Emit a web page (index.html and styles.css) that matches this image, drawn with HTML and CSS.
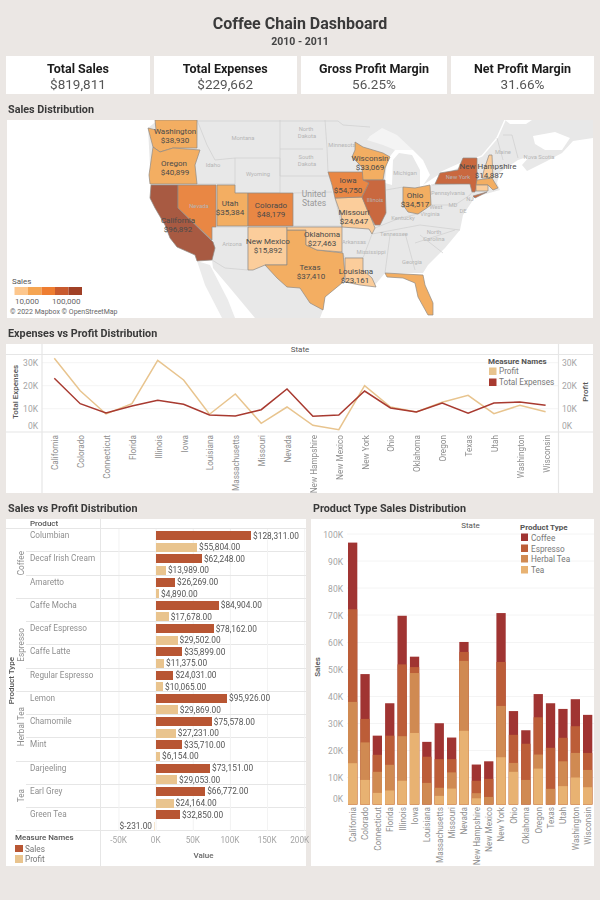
FILE: index.html
```html
<!DOCTYPE html>
<html lang="en">
<head>
<meta charset="utf-8">
<title>Coffee Chain Dashboard</title>
<link rel="stylesheet" href="styles.css">
</head>
<body>
<main class="page">
  <header class="head">
    <h1>Coffee Chain Dashboard</h1>
    <p>2010 - 2011</p>
  </header>

  <section class="kpis">
    <div class="kpi k1"><b>Total Sales</b><span>$819,811</span></div>
    <div class="kpi k2"><b>Total Expenses</b><span>$229,662</span></div>
    <div class="kpi k3"><b>Gross Profit Margin</b><span>56.25%</span></div>
    <div class="kpi k4"><b>Net Profit Margin</b><span>31.66%</span></div>
  </section>

  <h2>Sales Distribution</h2>
  <svg class="map" viewBox="7 120 586 198" xmlns="http://www.w3.org/2000/svg">
    <rect class="water" x="7" y="120" width="586" height="198"/>
    <polygon class="land" points="158,120 593,120 593,138 573,141 562,153 547,161 527,171 522,165 530,156 518,160 500,172 497,183 500,190 475,197 463,215 460,230 445,248 428,265 423,273 385,273 375,285 343,282 325,297 323,310 320,318 255,318 230,288 213,268 212,260 178,208 151,185 148,128"/>
    <polygon class="mex" points="197,261 210,265 228,300 235,318 222,318 205,285"/>
    <polygon class="lake" points="370,136 382,128 397,135 413,150 395,150 383,145 367,140"/>
    <polygon class="water" points="385,183 387,160 395,150 413,150 423,160 430,175 420,190 420,170 412,155 399,153 393,160 392,185"/>
    <polygon class="water" points="420,187 438,175 440,180 425,190"/>
    <polygon class="water" points="440,172 460,163 458,168 442,175"/>
    <polyline class="river" points="460,165 482,156 497,138 505,120"/>
    <polygon class="water" points="533,136 555,132 570,138 562,150 545,150 535,144"/>
    <polygon class="water" points="505,120 532,120 526,124 510,124"/>
    <path class="border" d="M197,121H338L343,125L370,127M197,120L207,145L215,160L235,158H280V193H235V158M280,120V176M280,149H323M280,176H330M325,120L327,148L328,172M293,193L332,192M335,198L342,227M197,184H235M216,227H248V270L225,268L212,260M342,252L345,258H363L372,234M372,234L420,225L460,230M455,230L415,243M375,228L400,218L418,214M390,235L385,273M405,233L415,270M420,235L443,253M418,214L430,205H455L470,195L472,192M431,185L470,183M386,190L403,187V205M293,226H342M497,138L503,160M503,135L512,135L518,158"/>

    <polygon class="c2" points="155,120 197,120 197,148 173,148 160,152 153,147 148,128 156,130"/>
    <polygon class="c2" points="153,147 160,152 173,148 200,150 195,165 197,184 150,184 149,175"/>
    <polygon class="c5" points="151,185 178,185 178,208 213,242 215,248 212,260 197,261 195,255 177,247 170,238 165,225 155,208 150,198"/>
    <polygon class="c3" points="178,185 216,185 216,227 212,227 212,240 178,208"/>
    <polygon class="c2" points="217,185 235,185 235,193 248,193 248,226 217,226"/>
    <polygon class="c3" points="248,193 293,193 293,226 248,226"/>
    <polygon class="c1" points="248,227 287,227 287,265 265,265 253,270 248,270"/>
    <polygon class="c2" points="287,230 306,230 306,245 317,250 343,253 345,275 342,283 325,297 323,310 310,303 300,288 287,287 277,278 265,265 287,265"/>
    <polygon class="c1" points="287,227 342,227 342,252 317,250 306,245 306,230 287,230"/>
    <polygon class="c1" points="345,258 363,258 363,270 372,278 376,287 360,285 345,282 345,275"/>
    <polygon class="c1" points="335,198 362,197 368,210 375,228 372,234 369,229 342,227 341,215"/>
    <polygon class="c3" points="328,172 363,172 369,183 362,197 335,198 332,185"/>
    <polygon class="c2" points="355,142 363,147 383,153 390,157 385,168 383,180 363,180 362,167 352,157 355,150"/>
    <polygon class="c4" points="363,180 385,180 386,213 380,225 375,225 368,212 362,197 369,183"/>
    <polygon class="c2" points="403,187 415,188 430,185 431,205 418,214 408,212 403,205"/>
    <polygon class="c2" points="385,273 423,275 425,285 433,303 433,315 428,315 418,297 415,283 403,278 387,277"/>
    <polygon class="c4" points="463,158 477,158 477,186 475,192 472,192 470,184 435,184 440,173 458,170"/>
    <polygon class="c4" points="473,196 487,192 475,198"/>
    <polygon class="c1" points="489,155 492,155 493,178 482,178 484,170"/>
    <polygon class="c2" points="477,180 492,178 498,188 493,190 488,185 476,185"/>
    <polygon class="c1" points="476,185 488,185 488,191 476,191"/>

    <g class="bg-labels">
      <text x="243" y="140">Montana</text><text x="213" y="167">Idaho</text><text x="258" y="176">Wyoming</text>
      <text x="232" y="246">Arizona</text><text x="199" y="208">Nevada</text><text x="306" y="131">North</text><text x="307" y="138">Dakota</text>
      <text x="306" y="159">South</text><text x="307" y="166">Dakota</text><text x="342" y="147">Minnesota</text><text x="405" y="175">Michigan</text>
      <text x="403" y="220">Kentucky</text><text x="394" y="236">Tennessee</text><text x="354" y="244">Arkansas</text><text x="371" y="254">Mississippi</text>
      <text x="412" y="264">Georgia</text><text x="448" y="195">Pennsylvania</text><text x="436" y="209">West</text><text x="430" y="216">Virginia</text>
      <text x="453" y="207">MD</text><text x="434" y="234">North</text><text x="434" y="241">Carolina</text><text x="503" y="154">Maine</text>
      <text x="539" y="159">Nova Scotia</text><text x="458" y="179">New York</text><text x="375" y="202">Illinois</text><text x="463" y="213">DE</text><text x="470" y="201">NJ</text>
    </g>
    <text class="country" x="314" y="197">United</text><text class="country" x="314" y="206">States</text>

    <g class="st">
      <text x="175" y="134">Washington</text><text x="175" y="143">$38,930</text>
      <text x="174" y="166">Oregon</text><text x="175" y="175">$40,899</text>
      <text x="178" y="223">California</text><text x="178" y="232">$96,892</text>
      <text x="230" y="206">Utah</text><text x="230" y="215">$35,384</text>
      <text x="271" y="208">Colorado</text><text x="271" y="217">$48,179</text>
      <text x="268" y="244">New Mexico</text><text x="268" y="253">$15,892</text>
      <text x="310" y="270">Texas</text><text x="311" y="279">$37,410</text>
      <text x="322" y="237">Oklahoma</text><text x="322" y="246">$27,463</text>
      <text x="356" y="274">Louisiana</text><text x="355" y="283">$23,161</text>
      <text x="354" y="215">Missouri</text><text x="354" y="224">$24,647</text>
      <text x="348" y="183">Iowa</text><text x="348" y="193">$54,750</text>
      <text x="370" y="161">Wisconsin</text><text x="370" y="170">$33,069</text>
      <text x="415" y="198">Ohio</text><text x="415" y="207">$34,517</text>
      <text x="488" y="169">New Hampshire</text><text x="489" y="178">$14,887</text>
    </g>

    <text class="lg-title" x="12" y="284">Sales</text>
    <rect class="r1" x="14.5" y="287" width="13.5" height="8"/><rect class="r2" x="28" y="287" width="13.5" height="8"/><rect class="r3" x="41.5" y="287" width="13.5" height="8"/><rect class="r4" x="55" y="287" width="13.5" height="8"/><rect class="r5" x="68.5" y="287" width="13.5" height="8"/>
    <text class="lg-val" x="15" y="304">10,000</text><text class="lg-val" x="52" y="304">100,000</text>
    <text class="copy" x="10" y="314">© 2022 Mapbox © OpenStreetMap</text>
  </svg>

  <h2>Expenses vs Profit Distribution</h2>
  <svg class="lines" viewBox="6 344 587 149" xmlns="http://www.w3.org/2000/svg">
    <rect class="panelbg" x="6" y="344" width="587" height="149"/>
    <path class="grid" d="M42,362.7H558M42,385.7H558M42,408.7H558"/>
    <path class="rule" d="M6,354.5H593M6,432H593M42,344V493M558.5,344V493"/>
    <text class="hdr" x="300" y="352">State</text>
    <g class="yl">
      <text x="38" y="366">30K</text><text x="38" y="389">20K</text><text x="38" y="412">10K</text><text x="38" y="429">0K</text>
    </g>
    <g class="yr">
      <text x="562" y="366">30K</text><text x="562" y="389">20K</text><text x="562" y="412">10K</text><text x="562" y="429">0K</text>
    </g>
    <text class="axt" transform="translate(18 392) rotate(-90)">Total Expenses</text>
    <text class="axt" transform="translate(588 392) rotate(-90)">Profit</text>
    <polyline class="l-profit" points="54.3,358.3 80.2,390.7 106,414 131.9,403.7 157.7,360.3 183.6,380 209.5,414.3 235.3,394 261.2,423.3 287,407 312.9,425.3 338.8,429.7 364.6,385.7 390.5,407 416.3,412 442.2,402.3 468.1,395.3 493.9,413.7 519.8,405.3 545.6,411.7"/>
    <polyline class="l-exp" points="54.3,378.3 80.2,403.7 106,413 131.9,406 157.7,400.3 183.6,404.3 209.5,415 235.3,416 261.2,409.7 287,389 312.9,416.3 338.8,415 364.6,391 390.5,408 416.3,412 442.2,403 468.1,413.3 493.9,403 519.8,402 545.6,405.3"/>
    <g class="xl">
      <text transform="translate(58 435) rotate(-90)">California</text>
      <text transform="translate(84 435) rotate(-90)">Colorado</text>
      <text transform="translate(110 435) rotate(-90)">Connecticut</text>
      <text transform="translate(136 435) rotate(-90)">Florida</text>
      <text transform="translate(161.500 435) rotate(-90)">Illinois</text>
      <text transform="translate(187.500 435) rotate(-90)">Iowa</text>
      <text transform="translate(213 435) rotate(-90)">Louisiana</text>
      <text transform="translate(239 435) rotate(-90)">Massachusetts</text>
      <text transform="translate(265 435) rotate(-90)">Missouri</text>
      <text transform="translate(291 435) rotate(-90)">Nevada</text>
      <text transform="translate(316.500 435) rotate(-90)">New Hampshire</text>
      <text transform="translate(342.500 435) rotate(-90)">New Mexico</text>
      <text transform="translate(368.500 435) rotate(-90)">New York</text>
      <text transform="translate(394 435) rotate(-90)">Ohio</text>
      <text transform="translate(420 435) rotate(-90)">Oklahoma</text>
      <text transform="translate(446 435) rotate(-90)">Oregon</text>
      <text transform="translate(472 435) rotate(-90)">Texas</text>
      <text transform="translate(497.500 435) rotate(-90)">Utah</text>
      <text transform="translate(523.500 435) rotate(-90)">Washington</text>
      <text transform="translate(549.500 435) rotate(-90)">Wisconsin</text>
    </g>
    <text class="lg-title2" x="488" y="364">Measure Names</text>
    <rect class="s-profit" x="489" y="367.500" width="7.500" height="7.500"/><text class="lg-item" x="499" y="374">Profit</text>
    <rect class="s-exp" x="489" y="378.500" width="7.500" height="7.500"/><text class="lg-item" x="499" y="385">Total Expenses</text>
  </svg>

  <section class="bottom">
    <div class="col-left">
      <h2>Sales vs Profit Distribution</h2>
      <div class="bars">
        <div class="th-blank"></div>
        <div class="th-product">Product</div>
        <div class="th-plot"></div>
        <div class="ptype"><span class="vert strong">Product Type</span></div>
        <div class="group g1"><span class="vert">Coffee</span></div>
        <div class="group g2"><span class="vert">Espresso</span></div>
        <div class="group g3"><span class="vert">Herbal Tea</span></div>
        <div class="group g4"><span class="vert">Tea</span></div>

        <div class="row"><div class="prod">Columbian</div><div class="plot"><div class="ln"><i class="b-s" style="width:95.6px"></i><span>$128,311.00</span></div><div class="ln"><i class="b-p" style="width:41.6px"></i><span>$55,804.00</span></div></div></div>
        <div class="row"><div class="prod">Decaf Irish Cream</div><div class="plot"><div class="ln"><i class="b-s" style="width:46.4px"></i><span>$62,248.00</span></div><div class="ln"><i class="b-p" style="width:10.4px"></i><span>$13,989.00</span></div></div></div>
        <div class="row end"><div class="prod">Amaretto</div><div class="plot"><div class="ln"><i class="b-s" style="width:19.6px"></i><span>$26,269.00</span></div><div class="ln"><i class="b-p" style="width:3.6px"></i><span>$4,890.00</span></div></div></div>
        <div class="row"><div class="prod">Caffe Mocha</div><div class="plot"><div class="ln"><i class="b-s" style="width:63.3px"></i><span>$84,904.00</span></div><div class="ln"><i class="b-p" style="width:13.2px"></i><span>$17,678.00</span></div></div></div>
        <div class="row"><div class="prod">Decaf Espresso</div><div class="plot"><div class="ln"><i class="b-s" style="width:58.2px"></i><span>$78,162.00</span></div><div class="ln"><i class="b-p" style="width:22px"></i><span>$29,502.00</span></div></div></div>
        <div class="row"><div class="prod">Caffe Latte</div><div class="plot"><div class="ln"><i class="b-s" style="width:26.7px"></i><span>$35,899.00</span></div><div class="ln"><i class="b-p" style="width:8.5px"></i><span>$11,375.00</span></div></div></div>
        <div class="row end"><div class="prod">Regular Espresso</div><div class="plot"><div class="ln"><i class="b-s" style="width:17.9px"></i><span>$24,031.00</span></div><div class="ln"><i class="b-p" style="width:7.5px"></i><span>$10,065.00</span></div></div></div>
        <div class="row"><div class="prod">Lemon</div><div class="plot"><div class="ln"><i class="b-s" style="width:71.5px"></i><span>$95,926.00</span></div><div class="ln"><i class="b-p" style="width:22.3px"></i><span>$29,869.00</span></div></div></div>
        <div class="row"><div class="prod">Chamomile</div><div class="plot"><div class="ln"><i class="b-s" style="width:56.3px"></i><span>$75,578.00</span></div><div class="ln"><i class="b-p" style="width:20.3px"></i><span>$27,231.00</span></div></div></div>
        <div class="row end"><div class="prod">Mint</div><div class="plot"><div class="ln"><i class="b-s" style="width:26.6px"></i><span>$35,710.00</span></div><div class="ln"><i class="b-p" style="width:4.6px"></i><span>$6,154.00</span></div></div></div>
        <div class="row"><div class="prod">Darjeeling</div><div class="plot"><div class="ln"><i class="b-s" style="width:54.5px"></i><span>$73,151.00</span></div><div class="ln"><i class="b-p" style="width:21.6px"></i><span>$29,053.00</span></div></div></div>
        <div class="row"><div class="prod">Earl Grey</div><div class="plot"><div class="ln"><i class="b-s" style="width:49.7px"></i><span>$66,772.00</span></div><div class="ln"><i class="b-p" style="width:18px"></i><span>$24,164.00</span></div></div></div>
        <div class="row end"><div class="prod">Green Tea</div><div class="plot"><div class="ln"><i class="b-s" style="width:24.5px"></i><span>$32,850.00</span></div><div class="ln neg"><span>$-231.00</span><i class="b-n"></i></div></div></div>

        <div class="legend">
          <div class="lg-head">Measure Names</div>
          <div class="lg-row"><i class="b-s"></i>Sales</div>
          <div class="lg-row"><i class="b-p"></i>Profit</div>
        </div>
        <div class="axis">
          <div class="ticks"><span>-50K</span><span>0K</span><span>50K</span><span>100K</span><span>150K</span><span class="last">200K</span></div>
          <div class="axis-title">Value</div>
        </div>
      </div>
    </div>

    <div class="col-right">
      <h2>Product Type Sales Distribution</h2>
      <svg class="stack" viewBox="311 519 283 347" xmlns="http://www.w3.org/2000/svg">
        <rect class="panelbg" x="311" y="519" width="283" height="347"/>
        <path class="grid" d="M347,534H594M347,561H594M347,588H594M347,615H594M347,642.500H594M347,669.500H594M347,696.500H594M347,723.500H594M347,750.500H594M347,777.500H594"/>
        <text class="hdr" x="470.500" y="528">State</text>
        <g class="yl">
          <text x="343" y="538">100K</text><text x="343" y="565">90K</text><text x="343" y="592">80K</text><text x="343" y="619">70K</text><text x="343" y="646">60K</text><text x="343" y="673">50K</text><text x="343" y="700">40K</text><text x="343" y="727">30K</text><text x="343" y="754">20K</text><text x="343" y="781">10K</text><text x="343" y="802">0K</text>
        </g>
        <text class="axt" transform="translate(320 667) rotate(-90)">Sales</text>

        <g class="sb" transform="translate(348 804.5) scale(1 -2.7)"><rect class="cof" height="97"/><rect class="esp" height="72.3"/><rect class="her" height="38"/><rect class="tea" height="15.3"/></g>
        <g class="sb" transform="translate(360.400 804.5) scale(1 -2.7)"><rect class="cof" height="48.3"/><rect class="esp" height="31.7"/><rect class="her" height="23"/><rect class="tea" height="9.1"/></g>
        <g class="sb" transform="translate(372.700 804.5) scale(1 -2.7)"><rect class="cof" height="25.5"/><rect class="esp" height="18.4"/><rect class="her" height="12.1"/><rect class="tea" height="4.3"/></g>
        <g class="sb" transform="translate(385.100 804.5) scale(1 -2.7)"><rect class="cof" height="37.5"/><rect class="esp" height="25.5"/><rect class="her" height="14.7"/><rect class="tea" height="5.2"/></g>
        <g class="sb" transform="translate(397.500 804.5) scale(1 -2.7)"><rect class="cof" height="69.9"/><rect class="esp" height="51.9"/><rect class="her" height="25.3"/><rect class="tea" height="8.8"/></g>
        <g class="sb" transform="translate(409.900 804.5) scale(1 -2.7)"><rect class="cof" height="54.75"/><rect class="esp" height="50.9"/><rect class="her" height="48.7"/><rect class="tea" height="26.5"/></g>
        <g class="sb" transform="translate(422.200 804.5) scale(1 -2.7)"><rect class="cof" height="23.2"/><rect class="esp" height="17.7"/><rect class="her" height="8"/></g>
        <g class="sb" transform="translate(434.600 804.5) scale(1 -2.7)"><rect class="cof" height="30.1"/><rect class="esp" height="16.8"/><rect class="her" height="6.2"/><rect class="tea" height="3.2"/></g>
        <g class="sb" transform="translate(447 804.5) scale(1 -2.7)"><rect class="cof" height="24.8"/><rect class="esp" height="16.8"/><rect class="her" height="11.9"/><rect class="tea" height="5.9"/></g>
        <g class="sb" transform="translate(459.300 804.5) scale(1 -2.7)"><rect class="cof" height="60.2"/><rect class="esp" height="56.5"/><rect class="her" height="53.2"/><rect class="tea" height="27.3"/></g>
        <g class="sb" transform="translate(471.700 804.5) scale(1 -2.7)"><rect class="cof" height="14.8"/><rect class="esp" height="8.8"/><rect class="her" height="4.2"/><rect class="tea" height="2.3"/></g>
        <g class="sb" transform="translate(484.100 804.5) scale(1 -2.7)"><rect class="cof" height="16"/><rect class="esp" height="9.5"/><rect class="her" height="2.8"/></g>
        <g class="sb" transform="translate(496.400 804.5) scale(1 -2.7)"><rect class="cof" height="70.9"/><rect class="esp" height="52.8"/><rect class="her" height="36.5"/><rect class="tea" height="17.5"/></g>
        <g class="sb" transform="translate(508.800 804.5) scale(1 -2.7)"><rect class="cof" height="34.6"/><rect class="esp" height="25.8"/><rect class="her" height="15.4"/><rect class="tea" height="12.1"/></g>
        <g class="sb" transform="translate(521.200 804.5) scale(1 -2.7)"><rect class="cof" height="27.5"/><rect class="esp" height="22.5"/><rect class="her" height="9.1"/></g>
        <g class="sb" transform="translate(533.600 804.5) scale(1 -2.7)"><rect class="cof" height="40.9"/><rect class="esp" height="32.3"/><rect class="her" height="18.5"/><rect class="tea" height="13.3"/></g>
        <g class="sb" transform="translate(545.900 804.5) scale(1 -2.7)"><rect class="cof" height="37.5"/><rect class="esp" height="21"/><rect class="her" height="5.8"/></g>
        <g class="sb" transform="translate(558.300 804.5) scale(1 -2.7)"><rect class="cof" height="35.4"/><rect class="esp" height="24.7"/><rect class="her" height="16"/><rect class="tea" height="6.8"/></g>
        <g class="sb" transform="translate(570.700 804.5) scale(1 -2.7)"><rect class="cof" height="39"/><rect class="esp" height="29"/><rect class="her" height="19.1"/><rect class="tea" height="10"/></g>
        <g class="sb" transform="translate(583 804.5) scale(1 -2.7)"><rect class="cof" height="33.2"/><rect class="esp" height="19.1"/><rect class="her" height="12.8"/><rect class="tea" height="6.4"/></g>

        <g class="xl">
          <text transform="translate(356 807) rotate(-90)">California</text>
          <text transform="translate(368.400 807) rotate(-90)">Colorado</text>
          <text transform="translate(380.700 807) rotate(-90)">Connecticut</text>
          <text transform="translate(393.100 807) rotate(-90)">Florida</text>
          <text transform="translate(405.500 807) rotate(-90)">Illinois</text>
          <text transform="translate(417.900 807) rotate(-90)">Iowa</text>
          <text transform="translate(430.200 807) rotate(-90)">Louisiana</text>
          <text transform="translate(442.600 807) rotate(-90)">Massachusetts</text>
          <text transform="translate(455 807) rotate(-90)">Missouri</text>
          <text transform="translate(467.300 807) rotate(-90)">Nevada</text>
          <text transform="translate(479.700 807) rotate(-90)">New Hampshire</text>
          <text transform="translate(492.100 807) rotate(-90)">New Mexico</text>
          <text transform="translate(504.400 807) rotate(-90)">New York</text>
          <text transform="translate(516.800 807) rotate(-90)">Ohio</text>
          <text transform="translate(529.200 807) rotate(-90)">Oklahoma</text>
          <text transform="translate(541.600 807) rotate(-90)">Oregon</text>
          <text transform="translate(553.900 807) rotate(-90)">Texas</text>
          <text transform="translate(566.300 807) rotate(-90)">Utah</text>
          <text transform="translate(578.700 807) rotate(-90)">Washington</text>
          <text transform="translate(591 807) rotate(-90)">Wisconsin</text>
        </g>

        <text class="lg-title2" x="520" y="530">Product Type</text>
        <rect class="cof" x="521" y="533.500" width="7" height="7.500"/><text class="lg-item" x="531" y="540.500">Coffee</text>
        <rect class="esp" x="521" y="544.500" width="7" height="7.500"/><text class="lg-item" x="531" y="551.500">Espresso</text>
        <rect class="her" x="521" y="555" width="7" height="7.500"/><text class="lg-item" x="531" y="562">Herbal Tea</text>
        <rect class="tea" x="521" y="566" width="7" height="7.500"/><text class="lg-item" x="531" y="573">Tea</text>
      </svg>
    </div>
  </section>
</main>
</body>
</html>
```

FILE: styles.css
```css
* { box-sizing: border-box; }
html, body { margin: 0; padding: 0; background: #ebe7e4; }
body { font-family: Roboto, "Liberation Sans", sans-serif; color: #333; }

.page {
  width: 600px;
  height: 900px;
  overflow: hidden;
  padding: 0 6px;
  filter: blur(0.3px);
}

.head { height: 56px; padding-top: 14px; text-align: center; }
.head h1 { margin: 0; font-size: 16px; line-height: 20px; font-weight: 700; color: #3a3a3a; }
.head p { margin: 1.5px 0 0; font-size: 10.5px; line-height: 12px; font-weight: 700; color: #444; }

.kpis { display: flex; height: 38px; }
.kpi {
  background: #fff;
  display: flex;
  flex-direction: column;
  align-items: center;
  justify-content: center;
  padding-top: 3px;
}
.kpi b { font-size: 12.5px; line-height: 15px; font-weight: 700; color: #1c1c1c; }
.kpi span { font-size: 13.5px; line-height: 17px; color: #555; }
.k1 { width: 144px; margin-right: 3.5px; }
.k2 { width: 143.5px; margin-right: 4px; }
.k3 { width: 146px; margin-right: 4px; }
.k4 { width: 143px; }

h2 {
  margin: 0;
  height: 26px;
  padding: 9px 0 0 2px;
  font-size: 10.8px;
  line-height: 14px;
  font-weight: 700;
  color: #3a3a3a;
}

svg { display: block; }
svg text { font-family: Roboto, "Liberation Sans", sans-serif; }

.map { width: 586px; height: 198px; margin-left: 1px; }
.water { fill: #fff; }
.land { fill: #e8e8e8; }
.lake { fill: #f4f4f4; }
.river { fill: none; stroke: #fff; stroke-width: 1.5; }
.mex { fill: #ebebeb; }
.border { fill: none; stroke: #cfcfcf; stroke-width: 0.7; }
.map polygon[class^="c"] { stroke: #8f8a84; stroke-width: 0.7; }
.c1 { fill: #fbcd9b; }
.c2 { fill: #f3ae62; }
.c3 { fill: #e98744; }
.c4 { fill: #c9683f; }
.c5 { fill: #a85a42; }
.bg-labels text { font-size: 5.8px; fill: #b5b5b5; text-anchor: middle; }
.country { font-size: 8.5px; fill: #999; text-anchor: middle; }
.st text { font-size: 8px; fill: #4a4a4a; text-anchor: middle; }
.lg-title { font-size: 8px; fill: #555; }
.lg-val { font-size: 8px; fill: #666; }
.copy { font-size: 7px; fill: #666; }
.r1 { fill: #fdc78d; }
.r2 { fill: #f5a552; }
.r3 { fill: #ee7d31; }
.r4 { fill: #c85a2e; }
.r5 { fill: #a04026; }

.lines { width: 587px; height: 149px; }
.panelbg { fill: #fff; }
.grid { fill: none; stroke: #f4f4f4; stroke-width: 1; }
.rule { fill: none; stroke: #e6e6e6; stroke-width: 1.2; }
.hdr { font-size: 8px; fill: #555; text-anchor: middle; }
.yl text { font-size: 8.5px; fill: #a5a5a5; text-anchor: end; }
.yr text { font-size: 8.5px; fill: #a5a5a5; }
.axt { font-size: 8px; font-weight: 500; fill: #555; text-anchor: middle; }
.xl text { font-size: 8.2px; fill: #8f8f8f; text-anchor: end; }
.l-profit { fill: none; stroke: #e8c48e; stroke-width: 1.5; }
.l-exp { fill: none; stroke: #a83a30; stroke-width: 1.5; }
.s-profit { fill: #e8c48e; }
.s-exp { fill: #a83a30; }
.lg-title2 { font-size: 8px; font-weight: 700; fill: #555; }
.lg-item { font-size: 8.2px; fill: #777; }

.bottom { display: flex; gap: 5px; }
.col-left { width: 300px; }
.col-right { width: 283px; }

.bars {
  display: grid;
  grid-template-columns: 10px 10px 74px 206px;
  grid-template-rows: 10px repeat(13, 23.27px) 34.5px;
  height: 347px;
  background: #fff;
}
.th-blank { grid-column: 1 / 3; grid-row: 1; border-bottom: 1.5px solid #e6e6e6; }
.th-product {
  grid-column: 3;
  grid-row: 1;
  padding-left: 4px;
  font-size: 8px;
  line-height: 9px;
  font-weight: 500;
  color: #555;
  border-bottom: 1.5px solid #e6e6e6;
}
.th-plot { grid-column: 4; grid-row: 1; border-left: 1.5px solid #e6e6e6; border-bottom: 1.5px solid #e6e6e6; }

.ptype { grid-column: 1; grid-row: 2 / span 13; }
.group { grid-column: 2; border-bottom: 1.5px solid #e6e6e6; }
.ptype, .group { display: flex; align-items: center; justify-content: center; }
.g1 { grid-row: 2 / span 3; }
.g2 { grid-row: 5 / span 4; }
.g3 { grid-row: 9 / span 3; }
.g4 { grid-row: 12 / span 3; }
.vert {
  writing-mode: vertical-rl;
  transform: rotate(180deg);
  font-size: 8.2px;
  color: #8f8f8f;
  white-space: nowrap;
}
.strong { color: #555; font-weight: 500; font-size: 8px; }

.row {
  grid-column: 3 / 5;
  display: grid;
  grid-template-columns: 74px 206px;
  border-bottom: 1.5px solid #e6e6e6;
}
.prod { padding: 1px 0 0 4px; font-size: 8.2px; line-height: 10px; color: #8f8f8f; white-space: nowrap; }
.plot {
  padding: 2px 0 0 54.5px;
  border-left: 1.5px solid #e6e6e6;
  display: flex;
  flex-direction: column;
  gap: 2.6px;
  background-image: linear-gradient(90deg, #f2f2f2 1px, transparent 1px);
  background-size: 37.15px 100%;
  background-position: 17.500px 0;
}
.ln {
  display: flex;
  align-items: center;
  height: 9px;
  gap: 2px;
  font-size: 8.3px;
  color: #555;
  white-space: nowrap;
}
.ln i { display: block; height: 9px; }
.b-s { background: #b85633; }
.b-p { background: #e9c48e; }
.neg { margin-left: -54.5px; width: 54px; justify-content: flex-end; }
.b-n { width: 1px; background: #f6e6cf; }

.legend { grid-column: 1 / 4; padding: 2px 0 0 9px; }
.lg-head { font-size: 8px; font-weight: 500; color: #555; line-height: 10px; }
.lg-row { display: flex; align-items: center; gap: 2px; height: 10.500px; font-size: 8.2px; color: #777; }
.lg-row i { display: block; width: 8px; height: 7.500px; }

.axis { grid-column: 4; border-left: 1.5px solid #e6e6e6; padding-top: 4px; }
.ticks { display: flex; margin-left: -1px; font-size: 8.2px; line-height: 10px; color: #a5a5a5; }
.ticks span { width: 37.15px; flex: none; text-align: center; }
.ticks .last { width: 28px; }
.axis-title { margin-top: 6px; text-align: center; font-size: 8px; font-weight: 500; line-height: 10px; color: #666; }

.stack { width: 283px; height: 347px; }
.sb rect { width: 9.300px; }
.cof { fill: #a03432; }
.esp { fill: #bc5d38; }
.her { fill: #d08a52; }
.tea { fill: #e8b272; }
```
